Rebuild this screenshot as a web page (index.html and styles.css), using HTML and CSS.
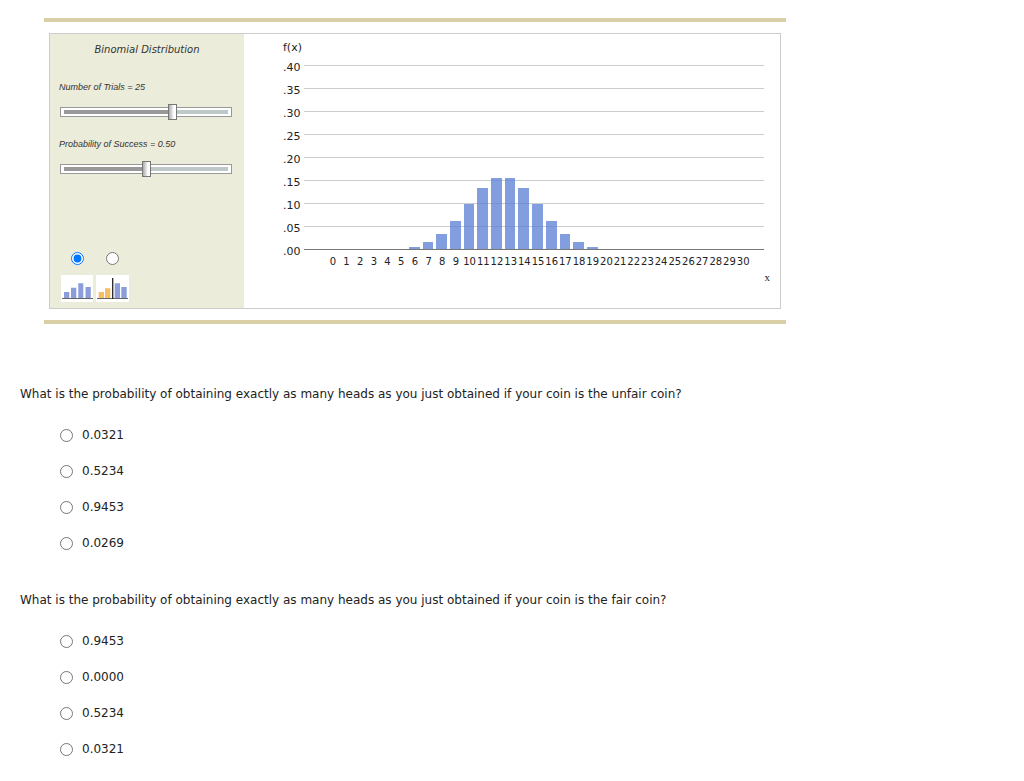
FILE: index.html
```html
<!DOCTYPE html>
<html lang="en">
<head>
    <meta charset="UTF-8">
    <meta name="viewport" content="width=device-width, initial-scale=1.0">
    <title>Binomial Distribution</title>

    <link rel="stylesheet" href="styles.css">
</head>
<body>
    <main>
        <section class="applet">
            <div class="frame">
                <div class="controls">
                    <h1>Binomial Distribution</h1>
                    <div class="control">
                        <label for="trials">Number of Trials = <span id="trialsValue">25</span></label>
                        <input type="range" id="trials" min="1" max="37" value="25">
                    </div>
                    <div class="control">
                        <label for="success">Probability of Success = <span id="successValue">0.50</span></label>
                        <input type="range" id="success" min="0" max="1" step="0.01" value="0.5">
                    </div>
                    <div class="modes">
                        <label class="mode">
                            <input type="radio" name="mode" value="plain" aria-label="Distribution" checked>
                            <svg width="32" height="27" viewBox="0 0 32 27">
                                <rect width="32" height="27" fill="#fff"/>
                                <path d="M3 17h5.3v7H3zM10 12.7h5.3V24H10zM17.3 8.3h5V24h-5zM24.5 12h5.3v12h-5.3z" fill="#8b9edb"/>
                                <path d="M1 23.5h31" stroke="#666"/>
                            </svg>
                        </label>
                        <label class="mode">
                            <input type="radio" name="mode" value="cut" aria-label="Distribution with cutoff">
                            <svg width="33" height="27" viewBox="0 0 33 27">
                                <rect width="33" height="27" fill="#fff"/>
                                <path d="M2.7 17H8v7H2.7zM9 13.3h5.3V24H9z" fill="#f8bd62"/>
                                <path d="M18.7 8.3H24V24h-5.3zM25.3 12h5.4v12h-5.4z" fill="#8b9edb"/>
                                <path d="M1 23.5h31" stroke="#666"/>
                                <path d="M16.7 3v21" stroke="#222" stroke-width="1.3"/>
                            </svg>
                        </label>
                    </div>
                </div>
                <div class="chart">
                    <div class="ytitle">f(x)</div>
                    <div class="yaxis">
                        <span>.40</span>
                        <span>.35</span>
                        <span>.30</span>
                        <span>.25</span>
                        <span>.20</span>
                        <span>.15</span>
                        <span>.10</span>
                        <span>.05</span>
                        <span>.00</span>
                    </div>
                    <div class="plot" id="plot"></div>
                    <div class="xaxis" id="xaxis"></div>
                    <div class="xtitle">x</div>
                </div>
            </div>
        </section>

        <fieldset class="question">
            <legend>What is the probability of obtaining exactly as many heads as you just obtained if your coin is the unfair coin?</legend>
            <label class="answer"><input type="radio" name="unfair"><span>0.0321</span></label>
            <label class="answer"><input type="radio" name="unfair"><span>0.5234</span></label>
            <label class="answer"><input type="radio" name="unfair"><span>0.9453</span></label>
            <label class="answer"><input type="radio" name="unfair"><span>0.0269</span></label>
        </fieldset>

        <fieldset class="question">
            <legend>What is the probability of obtaining exactly as many heads as you just obtained if your coin is the fair coin?</legend>
            <label class="answer"><input type="radio" name="fair"><span>0.9453</span></label>
            <label class="answer"><input type="radio" name="fair"><span>0.0000</span></label>
            <label class="answer"><input type="radio" name="fair"><span>0.5234</span></label>
            <label class="answer"><input type="radio" name="fair"><span>0.0321</span></label>
        </fieldset>
    </main>

    <script>
        "use strict";

        (function(){

            var trials = document.getElementById('trials');
            var success = document.getElementById('success');
            var plot = document.getElementById('plot');
            var xaxis = document.getElementById('xaxis');
            var lastX = 30;
            var topY = 0.4;

            trials.addEventListener('input', draw);
            success.addEventListener('input', draw);

            function binomial(n, k, p){
                var c = 1;
                if(k > n){
                    return 0;
                }
                for(var i=1; i<=k; i++){
                    c = c * (n - k + i) / i;
                }
                return c * Math.pow(p, k) * Math.pow(1 - p, n - k);
            }

            function fill(slider){
                var part = (slider.value - slider.min) / (slider.max - slider.min);
                slider.style.setProperty('--fill', part * 100 + '%');
            }

            function draw(){
                var bars = '';
                var labels = '';
                for(var x=0; x<=lastX; x++){
                    var y = binomial(+trials.value, x, +success.value);
                    // bars too small to see are left out
                    var height = (y < 0.003) ? 0 : Math.min(y / topY, 1) * 100;
                    bars += '<div class="bar" style="height: ' + height + '%"></div>';
                    labels += '<span>' + x + '</span>';
                }
                plot.innerHTML = bars;
                xaxis.innerHTML = labels;
                document.getElementById('trialsValue').textContent = trials.value;
                document.getElementById('successValue').textContent = (+success.value).toFixed(2);
                fill(trials);
                fill(success);
            }

            draw();

        })();
    </script>
</body>
</html>
```

FILE: styles.css
```css
*{
    box-sizing: border-box;
}
body{
    margin: 0;
    background: #fff;
    color: #222;
    font-family: Verdana, "DejaVu Sans", sans-serif;
    font-size: 12px;
}
main{
    padding: 18px 20px 0;
}
input{
    margin: 0;
}

/* applet */
.applet{
    max-width: 742px;
    margin: 0 0 62px 24px;
    padding: 11px 5px;
    border-top: 4px solid #d8cfa6;
    border-bottom: 4px solid #d8cfa6;
}
.frame{
    display: flex;
    border: 1px solid #ccc;
}
.controls{
    display: flex;
    flex-direction: column;
    width: 194px;
    padding: 9px 9px 6px;
    background: #ebecda;
    color: #333;
}
h1{
    margin: 0 0 24px;
    font-size: 10px;
    font-style: italic;
    font-weight: normal;
    line-height: 14px;
    text-align: center;
}
.control{
    display: flex;
    flex-direction: column;
    gap: 14px;
    margin-bottom: 21px;
    font-family: Arial, "Liberation Sans", sans-serif;
    font-size: 9px;
    font-style: italic;
    line-height: 12px;
}
input[type=range]{
    appearance: none;
    width: 172px;
    height: 10px;
    margin-left: 1px;
    border: 1px solid #999;
    background: linear-gradient(to right, #999 var(--fill), #bfc8c9 0) no-repeat center / calc(100% - 6px) 4px, #fff;
}
input[type=range]::-webkit-slider-runnable-track{
    height: 8px;
}
input[type=range]::-webkit-slider-thumb{
    appearance: none;
    width: 9px;
    height: 16px;
    margin-top: -4px;
    border: 1px solid #777;
    background: linear-gradient(to right, #aaa, #fff 70%);
}
.modes{
    display: flex;
    gap: 3px;
    margin-top: auto;
    padding-left: 2px;
}
.mode{
    display: flex;
    flex-direction: column;
    align-items: center;
    gap: 10px;
}
.mode input{
    width: 13px;
    height: 13px;
}

/* chart */
.chart{
    flex: 1;
    display: grid;
    grid-template-columns: 21px 1fr;
    grid-template-rows: 17px 200px 12px 20px;
    padding: 5px 16px 20px 39px;
    font-size: 11px;
}
.ytitle{
    grid-column: 1 / 3;
    line-height: 17px;
}
.yaxis{
    display: flex;
    flex-direction: column;
}
.yaxis span{
    line-height: 23px;
}
.plot{
    display: grid;
    grid-template-columns: repeat(31, 1fr);
    align-items: end;
    height: 185px;
    margin-top: 9px;
    padding: 0 14px 0 22px;
    border-bottom: 1px solid #777;
    background: repeating-linear-gradient(to bottom, #ccc 0, #ccc 1px, transparent 1px, transparent 23px);
}
.bar{
    margin: 0 2px 0 1px;
    background: rgba(92, 128, 213, 0.76);
}
.xaxis{
    grid-column: 2;
    display: grid;
    grid-template-columns: repeat(31, 1fr);
    padding: 0 14px 0 22px;
    font-size: 10px;
    line-height: 12px;
    text-align: center;
}
.xtitle{
    grid-column: 2;
    margin-right: -6px;
    font-family: "Times New Roman", "Liberation Serif", serif;
    text-align: right;
    line-height: 18px;
}

/* questions */
.question{
    min-width: 0;
    margin: 0 0 31px;
    padding: 0 0 0 40px;
    border: 0;
}
.question:last-child{
    margin-bottom: 0;
}
legend{
    margin: 0 0 15px -40px;
    padding: 0;
    line-height: 16px;
}
.answer{
    display: flex;
    align-items: center;
    gap: 9px;
    height: 36px;
}
.answer input{
    width: 13px;
    height: 13px;
}
```
